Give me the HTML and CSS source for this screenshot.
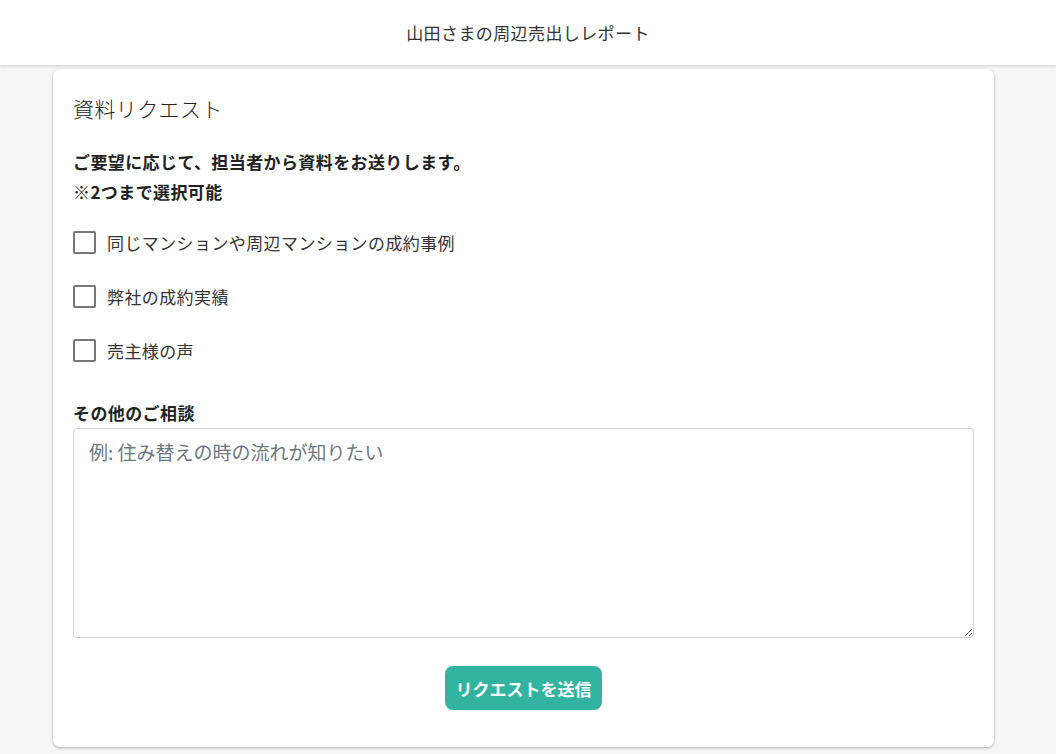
FILE: index.html
```html
<!DOCTYPE html>
<html lang="ja">
<head>
    <meta charset="UTF-8">
    <meta name="viewport" content="width=device-width, initial-scale=1.0">
    <title>資料リクエスト</title>
    <link rel="stylesheet" href="styles.css">
</head>
<body>
    <header class="site-header">山田さまの周辺売出しレポート</header>

    <main class="page">
        <section class="request-card">
            <h2 class="card-title">資料リクエスト</h2>

            <p class="lead">ご要望に応じて、担当者から資料をお送りします。<br>※2つまで選択可能</p>

            <div class="options">
                <label class="option">
                    <input type="checkbox">
                    <span class="box"></span>
                    <span>同じマンションや周辺マンションの成約事例</span>
                </label>
                <label class="option">
                    <input type="checkbox">
                    <span class="box"></span>
                    <span>弊社の成約実績</span>
                </label>
                <label class="option">
                    <input type="checkbox">
                    <span class="box"></span>
                    <span>売主様の声</span>
                </label>
            </div>

            <label class="field-label" for="consult">その他のご相談</label>
            <textarea id="consult" class="consult" placeholder="例: 住み替えの時の流れが知りたい"></textarea>

            <div class="actions">
                <button class="submit-btn" type="button">リクエストを送信</button>
            </div>
        </section>
    </main>
</body>
</html>
```

FILE: styles.css
```css
body {
    margin: 0;
    font-family: "Noto Sans CJK JP", "Noto Sans", sans-serif;
    letter-spacing: 0.4px;
    background-color: #f7f6f4;
    color: #222;
}

.site-header {
    height: 65px;
    background-color: #fff;
    display: flex;
    align-items: center;
    justify-content: center;
    font-size: 17px;
    color: #333;
    box-shadow: 0 1px 3px rgba(0, 0, 0, 0.18);
    position: relative;
    z-index: 1;
}

.page {
    padding: 4px 0 8px 53px;
    width: 941px;
}

.request-card {
    background-color: #fff;
    border-radius: 7px;
    box-shadow: 0 1px 3px rgba(0, 0, 0, 0.3);
    padding: 23px 20px 37px;
    display: flex;
    flex-direction: column;
}

.card-title {
    margin: 0;
    font-size: 21px;
    font-weight: 300;
    color: #222;
    line-height: 32px;
}

.lead {
    margin: 23px 0 0;
    font-size: 17px;
    font-weight: 700;
    line-height: 30px;
    color: #222;
}

.options {
    display: flex;
    flex-direction: column;
    gap: 31px;
    margin-top: 24px;
}

.option {
    display: flex;
    align-items: center;
    gap: 11px;
    font-size: 17px;
    color: #333;
    height: 23px;
    cursor: pointer;
}

.option input {
    display: none;
}

.box {
    width: 19px;
    height: 19px;
    border: 2px solid #777;
    border-radius: 2px;
    flex-shrink: 0;
}

.option input:checked + .box {
    background-color: #32b3a0;
    border-color: #32b3a0;
}

.field-label {
    margin-top: 39px;
    font-size: 17px;
    font-weight: 700;
    line-height: 24px;
}

.consult {
    margin-top: 3px;
    height: 210px;
    box-sizing: border-box;
    border: 1px solid #cfd4da;
    border-radius: 4px;
    padding: 9px 15px;
    font-family: inherit;
    font-size: 19px;
    letter-spacing: 0;
    resize: vertical;
}

.consult::placeholder {
    color: #6c7682;
}

.actions {
    display: flex;
    justify-content: center;
    margin-top: 28px;
}

.submit-btn {
    background-color: #32b3a0;
    color: #fff;
    border: none;
    border-radius: 8px;
    width: 157px;
    height: 44px;
    font-family: inherit;
    font-size: 17px;
    font-weight: 700;
    letter-spacing: 0;
    cursor: pointer;
}
```
